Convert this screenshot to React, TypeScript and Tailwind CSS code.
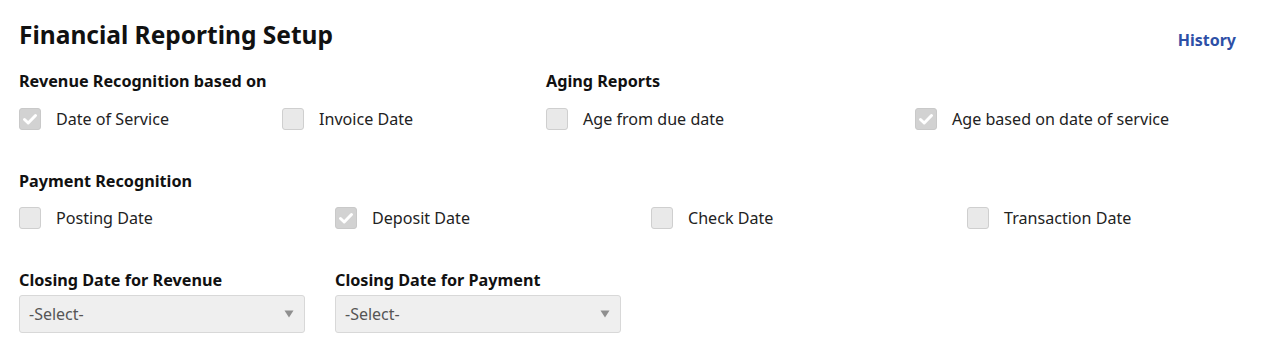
import type { ReactNode } from 'react';

const FONT = "font-['Noto_Sans',_'Open_Sans',_sans-serif]";

function Check({ checked, label }: { checked?: boolean; label: string }) {
  return (
    <label className="flex items-center gap-[15px] text-[16.1px] text-[#222]">
      <span
        className={`flex h-[22px] w-[22px] shrink-0 items-center justify-center rounded-[3px] border ${
          checked ? 'border-[#c9c9c9] bg-[#d2d2d2]' : 'border-[#cfcfcf] bg-[#e9e9e9]'
        }`}
      >
        {checked && (
          <svg width="16" height="16" viewBox="0 0 16 16" fill="none">
            <path d="M2.5 8.5 L6.2 12 L13.5 4.5" stroke="#fff" strokeWidth="3" strokeLinecap="round" strokeLinejoin="round" />
          </svg>
        )}
      </span>
      {label}
    </label>
  );
}

function SectionLabel({ children }: { children: ReactNode }) {
  return <div className="text-[16.2px] font-bold leading-[22px] text-[#111]">{children}</div>;
}

function Select() {
  return (
    <div className="flex h-[38px] w-[286px] items-center justify-between rounded-[3px] border border-[#d8d8d8] bg-[#efefef] pl-[9px] pr-[10px] text-[16px] text-[#555]">
      <span>-Select-</span>
      <svg width="10" height="8" viewBox="0 0 10 8">
        <path d="M0.5 0.5 L9.5 0.5 L5 7.5 Z" fill="#8f8f8f" />
      </svg>
    </div>
  );
}

export default function App() {
  return (
    <div className={`${FONT} h-[352px] w-[1267px] bg-white px-[19px] pt-[20px]`}>
      <div className="flex items-start justify-between">
        <h1 className="text-[24.5px] font-bold leading-[30px] text-[#111]">Financial Reporting Setup</h1>
        <a className="mr-[12px] mt-[8px] text-[16px] font-bold text-[#2d4fa6]">History</a>
      </div>

      <div className="mt-[18px] flex">
        <div className="w-[527px]">
          <SectionLabel>Revenue Recognition based on</SectionLabel>
          <div className="mt-[15px] flex">
            <div className="w-[263px]"><Check checked label="Date of Service" /></div>
            <Check label="Invoice Date" />
          </div>
        </div>
        <div>
          <SectionLabel>Aging Reports</SectionLabel>
          <div className="mt-[15px] flex">
            <div className="w-[369px]"><Check label="Age from due date" /></div>
            <Check checked label="Age based on date of service" />
          </div>
        </div>
      </div>

      <div className="mt-[39px]">
        <SectionLabel>Payment Recognition</SectionLabel>
        <div className="mt-[14px] grid grid-cols-[316px_316px_316px_316px]">
          <Check label="Posting Date" />
          <Check checked label="Deposit Date" />
          <Check label="Check Date" />
          <Check label="Transaction Date" />
        </div>
      </div>

      <div className="mt-[39px] flex gap-[30px]">
        <div>
          <SectionLabel>Closing Date for Revenue</SectionLabel>
          <div className="mt-[4px]"><Select /></div>
        </div>
        <div>
          <SectionLabel>Closing Date for Payment</SectionLabel>
          <div className="mt-[4px]"><Select /></div>
        </div>
      </div>
    </div>
  );
}
